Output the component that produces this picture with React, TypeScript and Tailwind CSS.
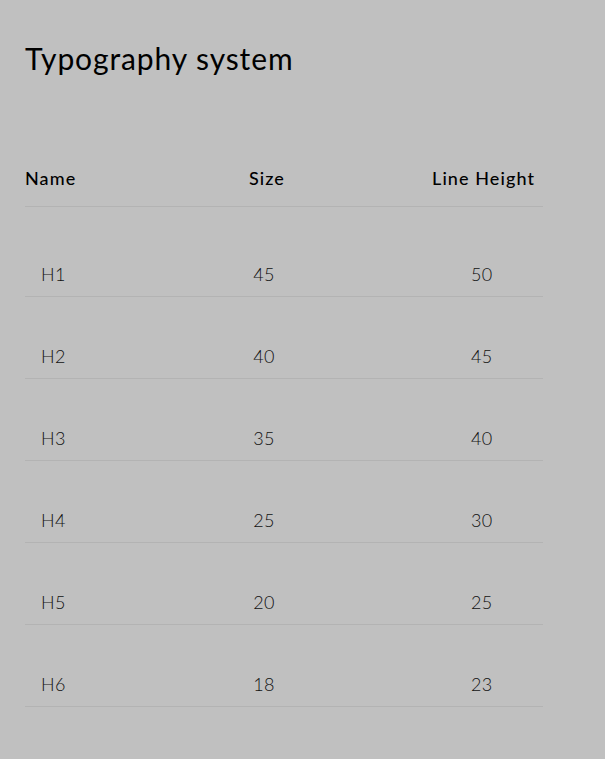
const rows = [
  { name: "H1", size: 45, lh: 50 },
  { name: "H2", size: 40, lh: 45 },
  { name: "H3", size: 35, lh: 40 },
  { name: "H4", size: 25, lh: 30 },
  { name: "H5", size: 20, lh: 25 },
  { name: "H6", size: 18, lh: 23 },
];

export default function App() {
  return (
    <div className="min-h-[759px] w-full bg-[#c0c0c0] px-[25px] pt-[40px] text-black font-['Lato','Noto_Sans',sans-serif]">
      <h1 className="text-[30px] leading-[36px] font-normal tracking-[0.03em]">Typography system</h1>

      <div className="mt-[90px] w-[518px]">
        <div className="grid grid-cols-[180px_120px_218px] border-b border-[#b3b3b3] pb-[16px] text-[18px] leading-[24px] font-medium tracking-[0.06em]">
          <div>Name</div>
          <div className="text-center pl-[4px]">Size</div>
          <div className="text-right pr-[8px]">Line Height</div>
        </div>

        <div className="pt-[8px]">
          {rows.map((r) => (
            <div
              key={r.name}
              className="grid grid-cols-[180px_120px_218px] border-b border-[#b3b3b3] pt-[47px] pb-[10px] text-[18px] leading-[24px] font-light text-[#111] tracking-[0.02em]"
            >
              <div className="pl-[16px]">{r.name}</div>
              <div className="text-center -ml-[2px]">{r.size}</div>
              <div className="pl-[146px]">{r.lh}</div>
            </div>
          ))}
        </div>
      </div>
    </div>
  );
}
